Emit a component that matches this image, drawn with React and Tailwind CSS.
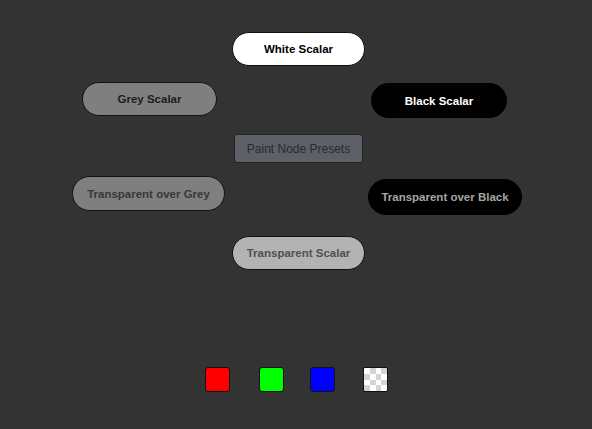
import React from "react";

const nodes = [
  { label: "White Scalar", cls: "left-[232px] top-[32px] w-[133px] h-[34px] bg-white text-black border-[#111]" },
  { label: "Grey Scalar", cls: "left-[82px] top-[82px] w-[135px] h-[34px] bg-[#7f7f7f] text-[#1c1c1c] border-[#111]" },
  { label: "Black Scalar", cls: "left-[371px] top-[83px] w-[136px] h-[35px] bg-black text-white border-black" },
  { label: "Transparent over Grey", cls: "left-[72px] top-[176px] w-[153px] h-[35px] bg-[#7f7f7f] text-[#383838] border-[#111]" },
  { label: "Transparent over Black", cls: "left-[368px] top-[179px] w-[154px] h-[36px] bg-black text-[#a6a6a6] border-black" },
  { label: "Transparent Scalar", cls: "left-[232px] top-[236px] w-[133px] h-[34px] bg-[#b3b3b3] text-[#505050] border-[#111]" },
];

function Checker() {
  const cells = [];
  for (let r = 0; r < 4; r++) {
    for (let c = 0; c < 4; c++) {
      cells.push(
        <div key={r + "-" + c} className={(r + c) % 2 === 0 ? "bg-white" : "bg-[#d4d4d4]"} />
      );
    }
  }
  return (
    <div className="w-[25px] h-[25px] border border-[#111] rounded-[2px] overflow-hidden grid grid-cols-4 grid-rows-4">
      {cells}
    </div>
  );
}

export default function App() {
  return (
    <div
      className="relative w-[592px] h-[429px] bg-[#333333] overflow-hidden"
      style={{ fontFamily: '"Liberation Sans", Arial, sans-serif' }}
    >
      {nodes.map((n) => (
        <div
          key={n.label}
          className={"absolute flex items-center justify-center pt-[2px] rounded-full border text-[11.5px] font-bold " + n.cls}
        >
          {n.label}
        </div>
      ))}

      <div className="absolute left-[234px] top-[134px] w-[129px] h-[29px] flex items-center justify-center pt-px rounded-[3px] border border-[#222] bg-[#5d6067] text-[12px] text-[#2a2a2a]">
        Paint Node Presets
      </div>

      <div className="absolute left-[205px] top-[367px] flex items-center">
        <div className="w-[25px] h-[25px] rounded-[3px] border border-[#111] bg-[#ff0000]" />
        <div className="ml-[29px] w-[25px] h-[25px] rounded-[3px] border border-[#111] bg-[#00ff00]" />
        <div className="ml-[26px] w-[25px] h-[25px] rounded-[3px] border border-[#111] bg-[#0000ff]" />
        <div className="ml-[28px]">
          <Checker />
        </div>
      </div>
    </div>
  );
}
